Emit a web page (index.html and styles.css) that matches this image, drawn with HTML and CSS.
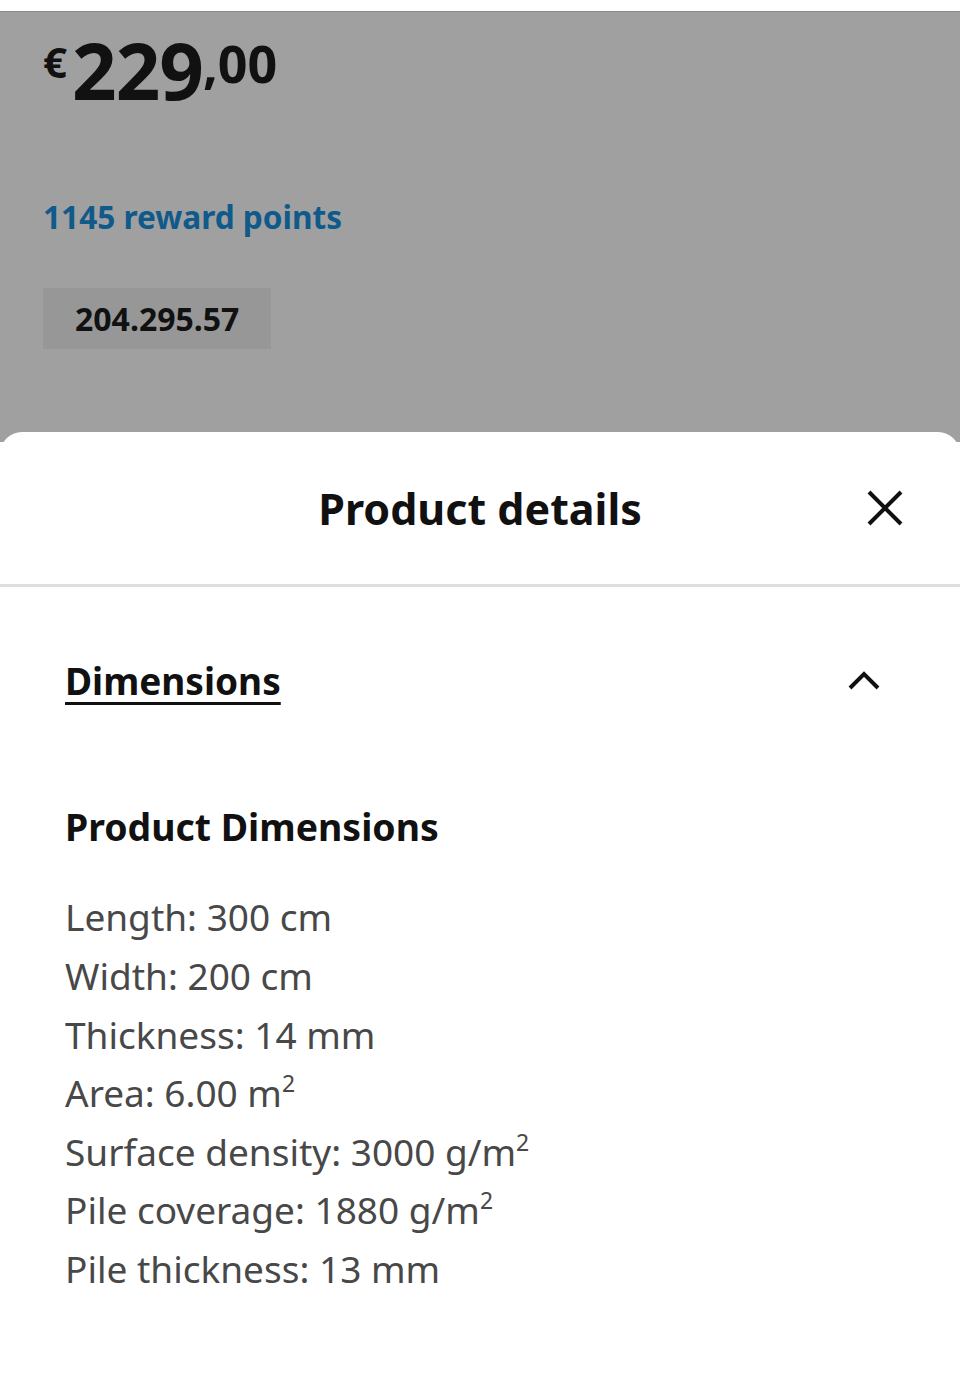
FILE: index.html
```html
<!DOCTYPE html>
<html lang="en">
<head>
  <meta charset="UTF-8" />
  <meta name="viewport" content="width=device-width, initial-scale=1.0" />
  <title>Product details</title>
  <link rel="stylesheet" href="styles.css">
</head>
<body>
  <div class="status-strip"></div>

  <div class="product-top">
    <div class="price">
      <span class="price-currency">€</span><span class="price-int">229</span><span class="price-dec">,00</span>
    </div>
    <a href="#" class="reward">1145 reward points</a>
    <div class="article-no">204.295.57</div>
  </div>

  <div class="sheet">
    <div class="sheet-header">
      <h2>Product details</h2>
      <button class="close-btn" aria-label="Close">
        <svg width="36" height="36" viewBox="0 0 36 36">
          <path d="M2 2 L34 34 M34 2 L2 34" stroke="#111" stroke-width="4" fill="none" />
        </svg>
      </button>
    </div>

    <div class="sheet-body">
      <div class="accordion-title">
        <span>Dimensions</span>
        <svg width="34" height="22" viewBox="0 0 34 22">
          <path d="M3 19 L17 5 L31 19" stroke="#111" stroke-width="4" fill="none" />
        </svg>
      </div>

      <h3>Product Dimensions</h3>
      <ul class="dim-list">
        <li>Length: 300 cm</li>
        <li>Width: 200 cm</li>
        <li>Thickness: 14 mm</li>
        <li>Area: 6.00 m<sup>2</sup></li>
        <li>Surface density: 3000 g/m<sup>2</sup></li>
        <li>Pile coverage: 1880 g/m<sup>2</sup></li>
        <li>Pile thickness: 13 mm</li>
      </ul>
    </div>
  </div>
</body>
</html>
```

FILE: styles.css
```css
body {
  margin: 0;
  font-family: 'Noto Sans', sans-serif;
  background: #fff;
  color: #111;
  height: 1373px;
  overflow: hidden;
}

.status-strip {
  height: 11px;
  background: #fff;
  border-bottom: 1px solid #8a8a8a;
}

.product-top {
  background: #a0a0a0;
  height: 430px;
  padding: 0 43px;
  box-sizing: border-box;
  overflow: hidden;
}

.price {
  display: flex;
  align-items: flex-start;
  height: 110px;
  padding-top: 19px;
  box-sizing: border-box;
  font-weight: 700;
  color: #111;
}

.price-currency {
  font-size: 42px;
  line-height: 1;
  margin-top: 10px;
  margin-right: 5px;
}

.price-int {
  font-size: 78px;
  line-height: 1;
  letter-spacing: -1px;
}

.price-dec {
  font-size: 52px;
  line-height: 1;
  margin-top: 6px;
}

.reward {
  display: block;
  margin-top: 76px;
  font-size: 31.6px;
  font-weight: 700;
  color: #0f5a8a;
  text-decoration: none;
  line-height: 1.2;
}

.article-no {
  display: inline-block;
  margin-top: 52px;
  background: #979797;
  padding: 0 32px;
  height: 61px;
  line-height: 61px;
  font-size: 32px;
  font-weight: 700;
  color: #111;
}

.sheet {
  background: #fff;
  border-radius: 22px 22px 0 0;
  margin-top: -10px;
  position: relative;
}

.sheet-header {
  display: flex;
  align-items: center;
  justify-content: center;
  height: 152px;
  border-bottom: 3px solid #dfdfdf;
  position: relative;
}

.sheet-header h2 {
  margin: 0;
  font-size: 43px;
  font-weight: 700;
}

.close-btn {
  position: absolute;
  right: 57px;
  top: 58px;
  background: none;
  border: none;
  padding: 0;
  width: 36px;
  height: 36px;
  cursor: pointer;
}

.sheet-body {
  padding: 0 65px;
}

.accordion-title {
  display: flex;
  justify-content: space-between;
  align-items: center;
  height: 186px;
  font-size: 37px;
  font-weight: 700;
}

.accordion-title span {
  text-decoration: underline;
  text-decoration-thickness: 3px;
  text-underline-offset: 7px;
}

.accordion-title svg {
  margin-right: 14px;
}

h3 {
  margin: 28px 0 35px;
  font-size: 37.4px;
  font-weight: 700;
  line-height: 1.4;
}

.dim-list {
  list-style: none;
  margin: 0;
  padding: 0;
  color: #484848;
  font-size: 37px;
  line-height: 58.6px;
}

.dim-list sup {
  font-size: 23px;
  line-height: 0;
  vertical-align: 15px;
}
```
